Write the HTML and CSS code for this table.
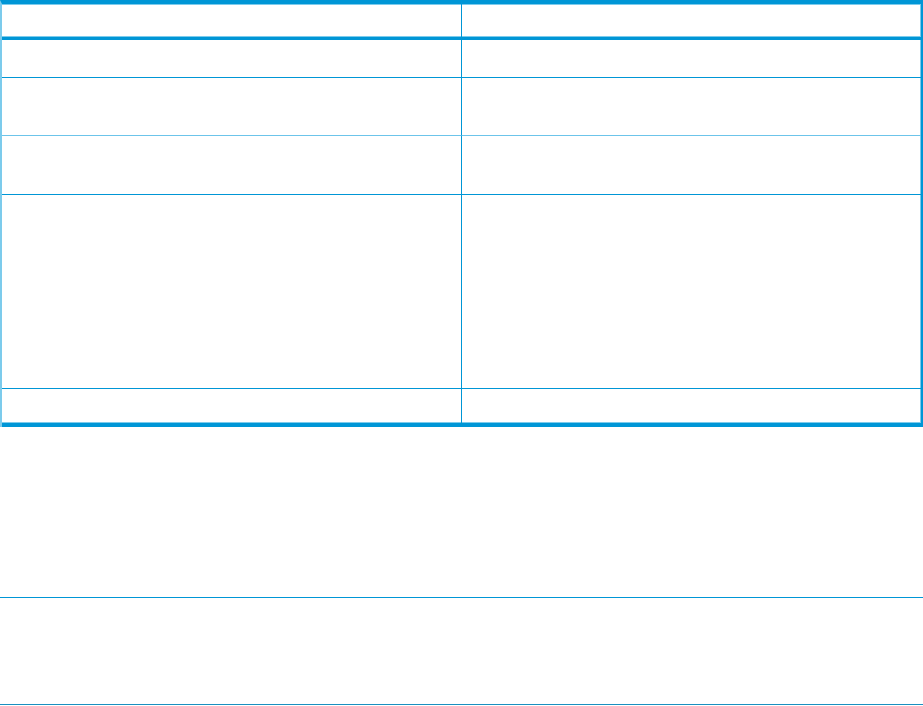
FILE: index.html
```html
<!DOCTYPE html>
<html lang="en">
<head>
    <meta charset="UTF-8">
    <meta name="viewport" content="width=device-width, initial-scale=1.0">
    <title>Table</title>
    <link rel="stylesheet" href="styles.css">
</head>
<body>
    <table class="spec-table">
        <thead>
            <tr class="row-head">
                <th></th>
                <th></th>
            </tr>
        </thead>
        <tbody>
            <tr class="row-1">
                <td></td>
                <td></td>
            </tr>
            <tr class="row-2 soft">
                <td></td>
                <td></td>
            </tr>
            <tr class="row-3">
                <td></td>
                <td></td>
            </tr>
            <tr class="row-4">
                <td></td>
                <td></td>
            </tr>
            <tr class="row-5 last">
                <td></td>
                <td></td>
            </tr>
        </tbody>
    </table>

    <div class="note"></div>
</body>
</html>
```

FILE: styles.css
```css
body {
    font-family: "Liberation Sans", Arial, sans-serif;
    margin: 0;
    background: #ffffff;
}

.spec-table {
    width: 923px;
    border-collapse: separate;
    border-spacing: 0;
    border-top: 4px solid #0096d6;
    border-left: 2px solid #7ccbec;
    border-right: 2px solid #0096d6;
    table-layout: fixed;
}

.spec-table th,
.spec-table td {
    box-sizing: border-box;
    padding: 0;
    border-bottom: 1px solid #0096d6;
}

.spec-table th:first-child,
.spec-table td:first-child {
    width: 460px;
    border-right: 1px solid #0096d6;
}

.spec-table th:last-child,
.spec-table td:last-child {
    box-shadow: inset -1px 0 0 #7ccbec;
}

.row-head th {
    height: 36px;
    border-bottom: 3px solid #0096d6;
    box-shadow: inset 0 1px 0 #7ccbec, inset 0 -1px 0 #7ccbec;
}

.row-head th:last-child {
    box-shadow: inset 0 1px 0 #7ccbec, inset 0 -1px 0 #7ccbec, inset -1px 0 0 #7ccbec;
}

.row-1 td { height: 38px; }
.row-2 td { height: 58px; }
.row-3 td { height: 59px; }
.row-4 td { height: 194px; }
.row-5 td { height: 38px; }

.soft td {
    border-bottom-color: #6cc4ea;
}

.last td {
    border-bottom: 4px solid #0096d6;
    box-shadow: inset 0 -1px 0 #7ccbec;
}

.last td:last-child {
    box-shadow: inset 0 -1px 0 #7ccbec, inset -1px 0 0 #7ccbec;
}

.note {
    box-sizing: border-box;
    width: 923px;
    height: 108px;
    margin-top: 170px;
    border-top: 1px solid #0096d6;
    border-bottom: 1px solid #1a8fc0;
}
```
